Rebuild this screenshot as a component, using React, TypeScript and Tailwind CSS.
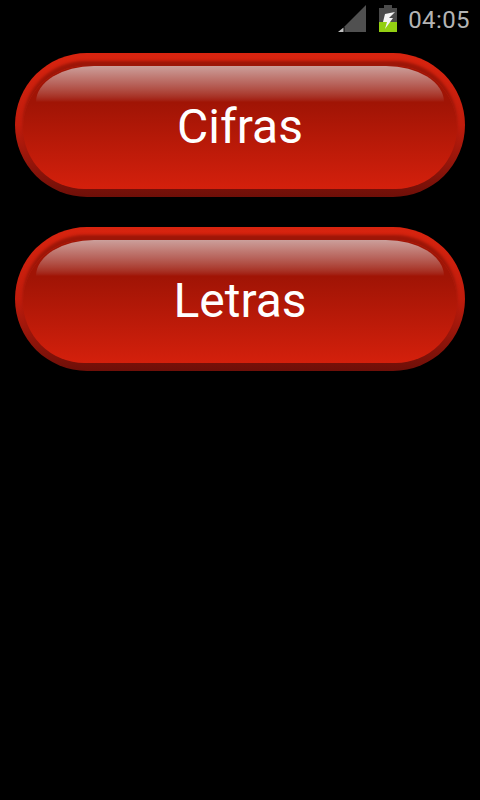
const buttons = ['Cifras', 'Letras'];

function SignalIcon() {
  return (
    <svg width="30" height="28" viewBox="0 0 30 28">
      <path d="M29 0V27H7.5V21.5Z" fill="#505050" />
      <path d="M1 27L6.5 22.5V27Z" fill="#c0c0c0" />
    </svg>
  );
}

function BatteryIcon() {
  return (
    <svg width="18" height="28" viewBox="0 0 18 28">
      <rect x="5" y="0" width="8" height="3" fill="#4a4a4a" />
      <rect x="0" y="3" width="18" height="15" fill="#4a4a4a" />
      <rect x="0" y="17" width="18" height="10" fill="#93cf12" />
      <path d="M16 7L6 9L4 17H8L6 24L14 13H10Z" fill="#f4f4f4" />
    </svg>
  );
}

function GlossButton({ label }: { label: string }) {
  return (
    <button className="w-[450px] h-[144px] rounded-[72px] p-[8px] pt-[13px] bg-gradient-to-b from-[#d8240f] via-[#c01c0c] to-[#6e0f08] block">
      <div className="relative w-full h-full rounded-[64px] shadow-[0_-5px_3px_#9c1608] overflow-hidden bg-[linear-gradient(to_bottom,#a01405_0%,#a01405_30%,#d4200c_100%)] flex items-center justify-center">
        <div className="absolute left-[13px] right-[13px] top-0 h-[36px] rounded-t-[58px_36px] bg-gradient-to-b from-[#cb9f9b] via-[#b7625a] to-[#a01405]" />
        <span className="relative text-white text-[48px] leading-none pb-[2px] font-['Roboto',sans-serif]">{label}</span>
      </div>
    </button>
  );
}

export default function App() {
  return (
    <div className="w-[480px] h-[800px] bg-black overflow-hidden">
      <div className="h-[38px] flex items-start justify-end pr-[10px] pt-[5px]">
        <SignalIcon />
        <div className="ml-[12px]">
          <BatteryIcon />
        </div>
        <span className="ml-[11px] mt-[3px] text-[24px] tracking-[0.4px] leading-none text-[#b4b4b4] font-['Roboto',sans-serif]">04:05</span>
      </div>
      <div className="flex flex-col items-center gap-[30px] pt-[15px]">
        {buttons.map((b) => (
          <GlossButton key={b} label={b} />
        ))}
      </div>
    </div>
  );
}
